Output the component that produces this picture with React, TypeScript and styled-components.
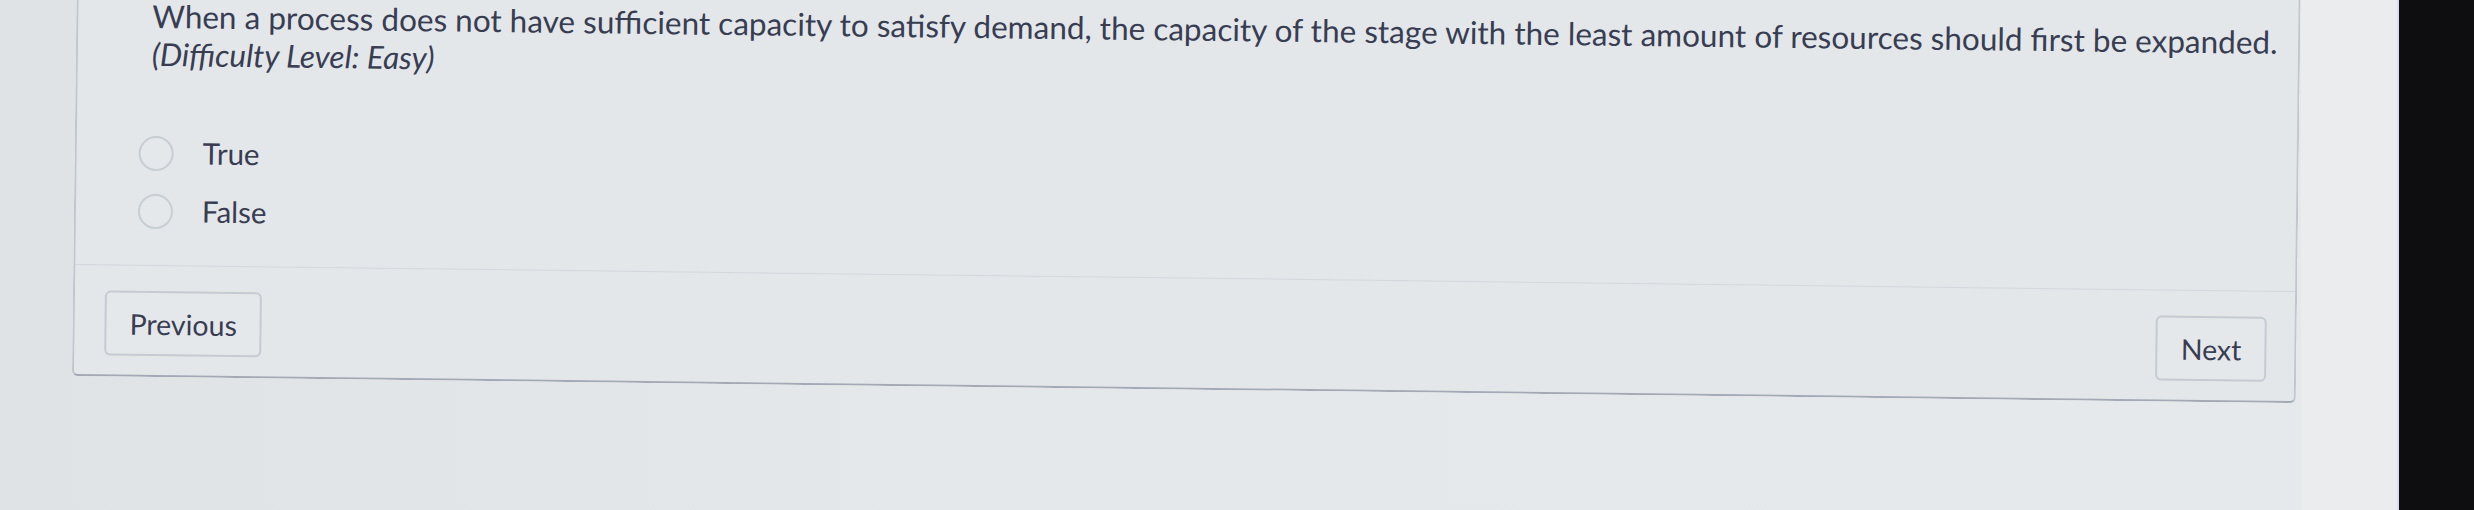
import React from "react";
import styled, { createGlobalStyle } from "styled-components";

const GlobalStyle = createGlobalStyle`
  html,
  body {
    margin: 0;
    padding: 0;
  }
  body {
    background: #e2e6e9;
    font-family: Lato, "Open Sans", "Liberation Sans", sans-serif;
    overflow: hidden;
  }
`;

const Screen = styled("div")`
  display: flex;
  width: 2474px;
  height: 510px;
  overflow: hidden;
`;

const Main = styled("main")`
  flex: 1;
  min-width: 0;
  padding: 0 96px 0 77px;
  background: linear-gradient(
    to right,
    #dfe3e6 0,
    #e4e8ea 40%,
    #e6e9eb calc(100% - 96px),
    #eaeced calc(100% - 96px)
  );
`;

const Bezel = styled("div")`
  flex: 0 0 75px;
  background: #0e0e11;
  border-left: 2px solid #d6dcf2;
`;

const Panel = styled("section")`
  margin-top: -40px;
  border: 2px solid #c2c7ce;
  border-bottom-color: #a3aab6;
  border-radius: 6px;
  background: #e3e7ea;
  transform: rotate(0.7deg);
  transform-origin: 0 0;
  color: #383d52;
`;

const Body = styled("div")`
  padding: 34px 28px 25px 62px;
  border-bottom: 1px solid #d3d7db;
`;

const Question = styled("div")`
  display: flex;
  flex-direction: column;
  margin: 0 0 51px 12px;
  font-size: 31.5px;
  line-height: 38px;
  white-space: nowrap;
`;

const Difficulty = styled("em")`
  font-style: italic;
`;

const Options = styled("div")`
  display: flex;
  flex-direction: column;
`;

const Option = styled("label")`
  display: flex;
  align-items: center;
  gap: 29px;
  height: 58px;
  font-size: 29.5px;
  line-height: 58px;
  cursor: pointer;

  & input {
    appearance: none;
    margin: 0;
    width: 35px;
    height: 35px;
    border: 2px solid #c9ced3;
    border-radius: 50%;
    background: #e4e8eb;
  }
`;

const Footer = styled("div")`
  display: flex;
  justify-content: space-between;
  padding: 25px 28px 19px 30px;
`;

const NavButton = styled("button")`
  height: 65px;
  padding: 0 23px;
  border: 2px solid #c6cbd1;
  border-radius: 6px;
  background: #e5e8eb;
  color: #383d52;
  font-family: Lato, "Open Sans", "Liberation Sans", sans-serif;
  font-size: 28.5px;
  cursor: pointer;
`;

export default function App() {
  return (
    <>
      <GlobalStyle />
      <Screen>
        <Main>
          <Panel>
            <Body>
              <Question>
                <span>
                  When a process does not have sufficient capacity to satisfy
                  demand, the capacity of the stage with the least amount of
                  resources should first be expanded.
                </span>
                <Difficulty>(Difficulty Level: Easy)</Difficulty>
              </Question>
              <Options>
                <Option>
                  <input type="radio" name="answer" />
                  True
                </Option>
                <Option>
                  <input type="radio" name="answer" />
                  False
                </Option>
              </Options>
            </Body>
            <Footer>
              <NavButton>Previous</NavButton>
              <NavButton>Next</NavButton>
            </Footer>
          </Panel>
        </Main>
        <Bezel />
      </Screen>
    </>
  );
}
